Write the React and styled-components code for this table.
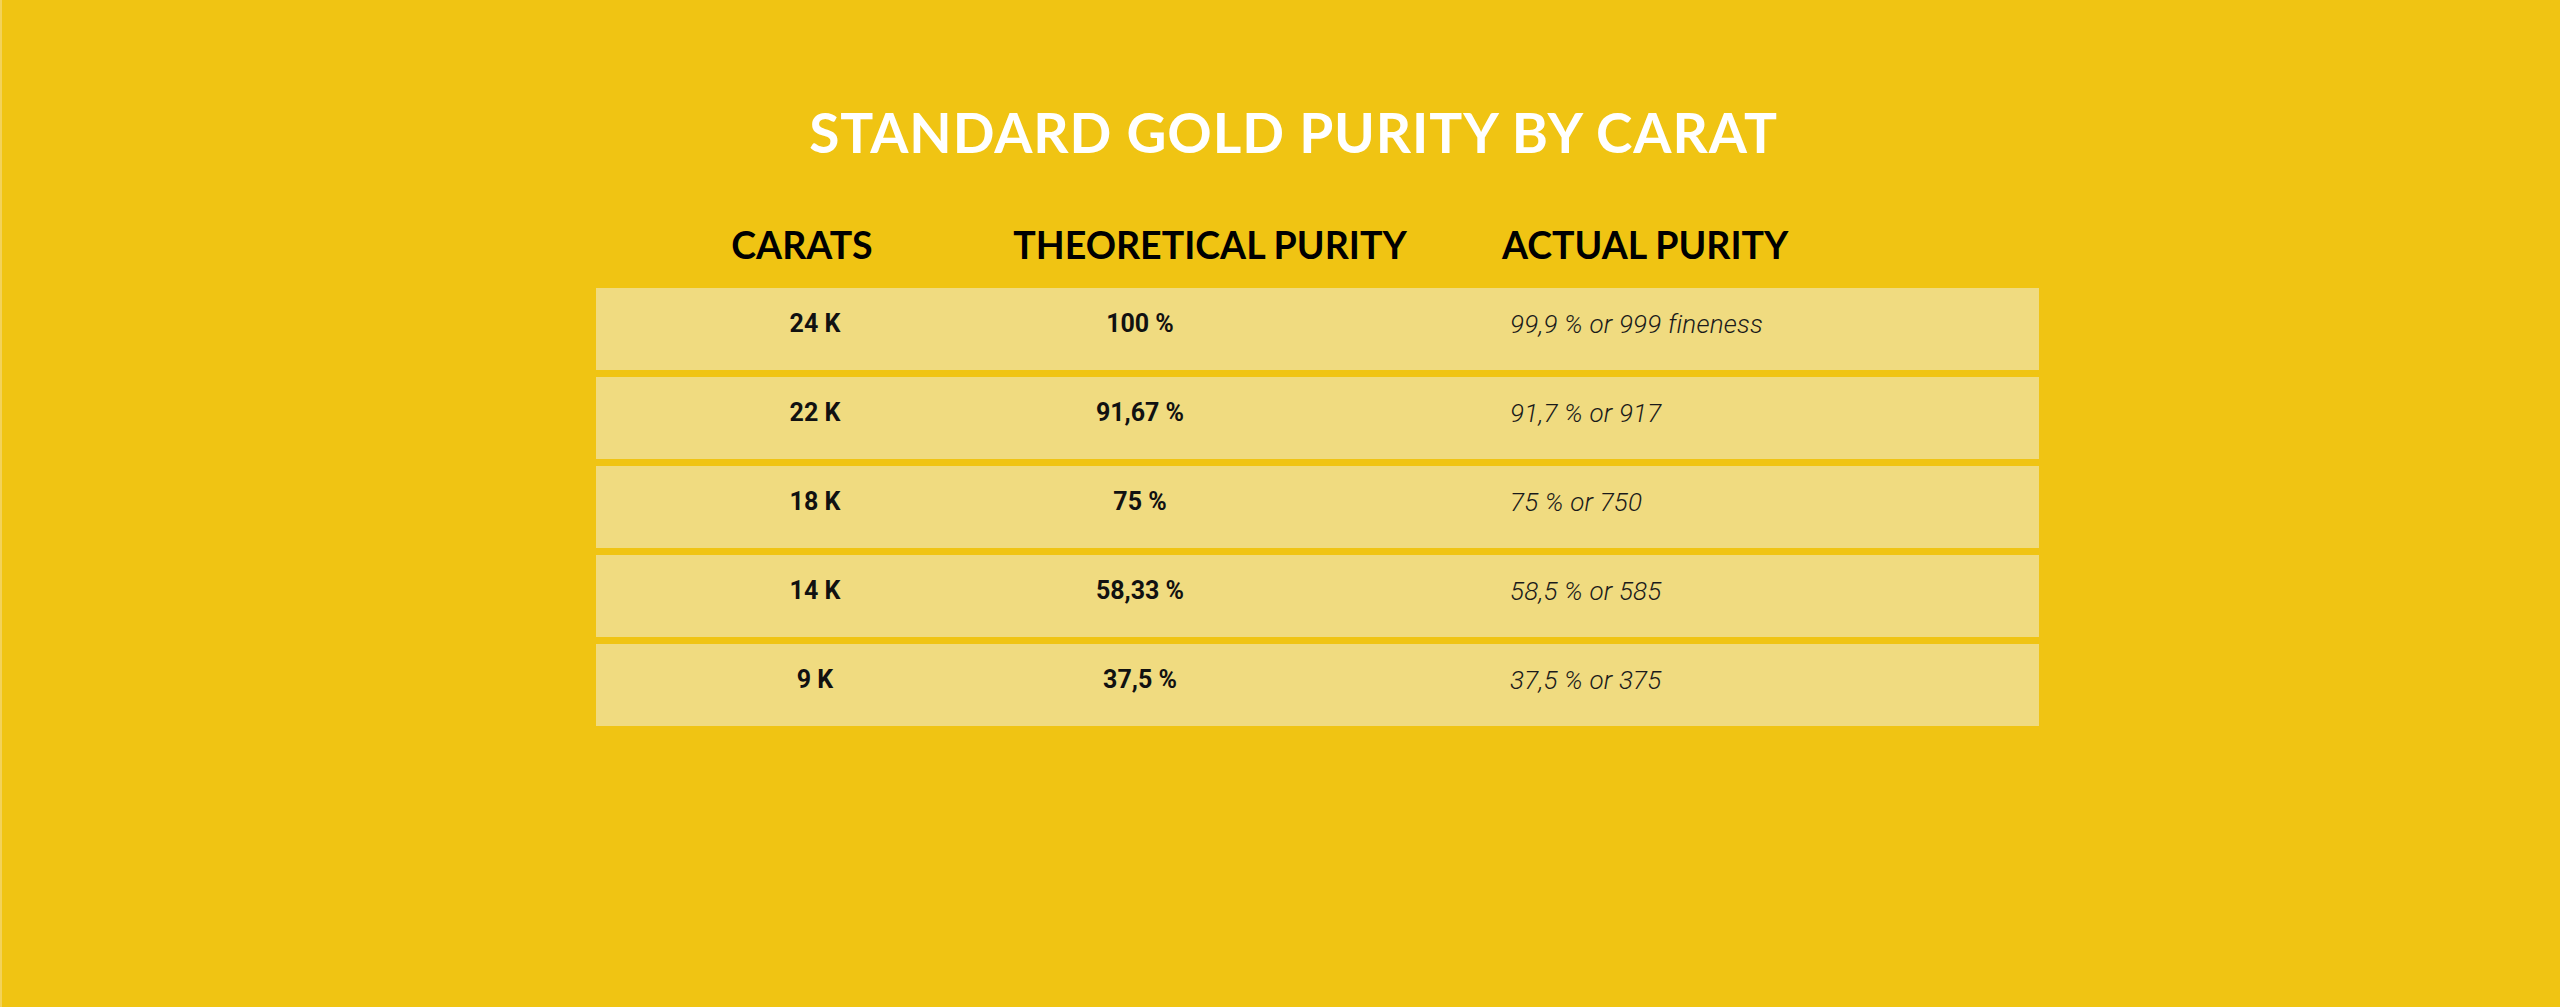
import React from 'react';
import styled, { createGlobalStyle } from 'styled-components';

const GlobalStyle = createGlobalStyle`
  html, body {
    margin: 0;
    padding: 0;
    background-color: #f0c413;
  }
  body {
    font-family: 'Roboto', 'Liberation Sans', sans-serif;
  }
`;

const Page = styled.div`
  min-height: 1007px;
  box-sizing: border-box;
  padding: 105px 0 0 596px;
  box-shadow: inset 2px 0 0 #f3d258;
`;

const Title = styled.h1`
  width: 1443px;
  margin: 0 0 0 -24px;
  text-align: center;
  font-family: 'Lato', 'Liberation Sans', sans-serif;
  font-weight: 700;
  font-size: 55px;
  letter-spacing: 0.9px;
  line-height: 1;
  color: #fff;
  text-transform: uppercase;
`;

const Table = styled.div`
  width: 1443px;
  margin-top: 66px;
  display: flex;
  flex-direction: column;
`;

const HeadRow = styled.div`
  display: grid;
  grid-template-columns: 412px 404px 1fr;
  margin-bottom: 24px;
`;

const HeadCell = styled.div`
  font-family: 'Lato', 'Liberation Sans', sans-serif;
  font-weight: 700;
  font-size: 37.5px;
  line-height: 1;
  color: #000;
  text-transform: uppercase;
  text-align: ${(p) => (p.left ? 'left' : 'center')};
  padding-left: ${(p) => (p.left ? '90px' : '0')};
`;

const Rows = styled.div`
  display: flex;
  flex-direction: column;
  gap: 7px;
`;

const Row = styled.div`
  display: grid;
  grid-template-columns: 438px 212px 1fr;
  height: 82px;
  box-sizing: border-box;
  padding-top: 23px;
  background-color: #f0db80;
`;

const Cell = styled.div`
  font-size: ${(p) => (p.italic ? '26px' : '25px')};
  letter-spacing: ${(p) => (p.italic ? '0.2px' : '0')};
  line-height: 1;
  color: ${(p) => (p.italic ? '#1a1a1a' : '#111')};
  text-align: ${(p) => (p.left ? 'left' : 'center')};
  padding-left: ${(p) => (p.left ? '264px' : '0')};
  font-weight: ${(p) => (p.italic ? 300 : 700)};
  font-style: ${(p) => (p.italic ? 'italic' : 'normal')};
`;

const data = [
  ['24 K', '100 %', '99,9 % or 999 fineness'],
  ['22 K', '91,67 %', '91,7 % or 917'],
  ['18 K', '75 %', '75 % or 750'],
  ['14 K', '58,33 %', '58,5 % or 585'],
  ['9 K', '37,5 %', '37,5 % or 375'],
];

export default function App() {
  return (
    <>
      <GlobalStyle />
      <Page>
        <Title>Standard gold purity by carat</Title>
        <Table>
          <HeadRow>
            <HeadCell>Carats</HeadCell>
            <HeadCell>Theoretical purity</HeadCell>
            <HeadCell left>Actual purity</HeadCell>
          </HeadRow>
          <Rows>
            {data.map(([carat, theory, actual]) => (
              <Row key={carat}>
                <Cell>{carat}</Cell>
                <Cell>{theory}</Cell>
                <Cell left italic>
                  {actual}
                </Cell>
              </Row>
            ))}
          </Rows>
        </Table>
      </Page>
    </>
  );
}
